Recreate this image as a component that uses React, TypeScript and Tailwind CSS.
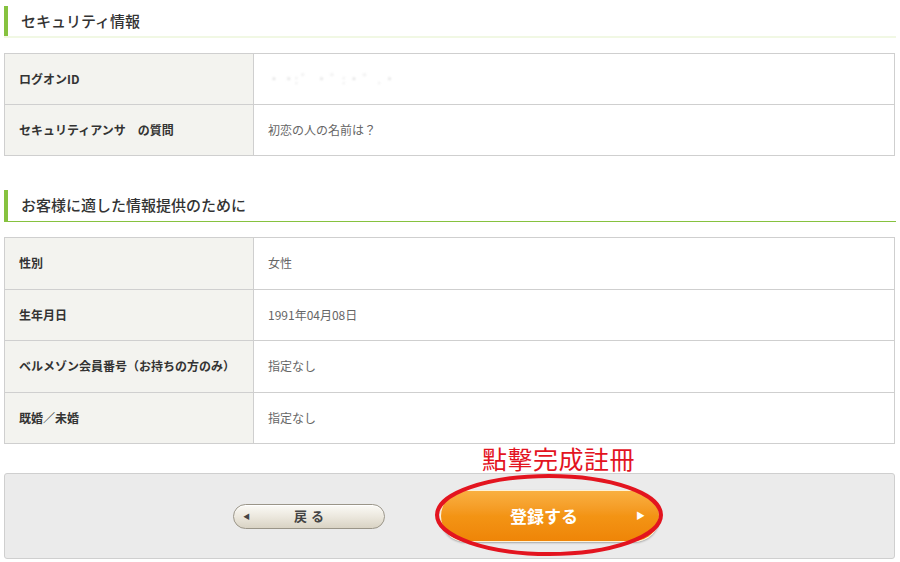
const font = { fontFamily: '"Noto Sans CJK JP", "Noto Sans", sans-serif' };

type Row = { label: string; value: string; blur?: boolean };

const security: Row[] = [
  { label: "ログオンID", value: "・ ・: ゛ ・ ゛: ・ ゜ . ・", blur: true },
  { label: "セキュリティアンサ　の質問", value: "初恋の人の名前は？" },
];

const profile: Row[] = [
  { label: "性別", value: "女性" },
  { label: "生年月日", value: "1991年04月08日" },
  { label: "ベルメゾン会員番号（お持ちの方のみ）", value: "指定なし" },
  { label: "既婚／未婚", value: "指定なし" },
];

function Heading({ title, faint }: { title: string; faint?: boolean }) {
  return (
    <div
      className={
        faint
          ? "flex h-[32px] items-center border-b-2 border-[#f1f8e4]"
          : "flex h-[32px] items-center border-b border-[#86c23f]"
      }
    >
      <div className="h-full w-[4px] bg-[#86c23f]" />
      <h2 className="pl-[13px] text-[15px] font-medium text-[#333]">{title}</h2>
    </div>
  );
}

function Table({ rows, rowH }: { rows: Row[]; rowH: string }) {
  return (
    <div className="border border-b-0 border-[#cfcfcf]">
      {rows.map((r) => (
        <div key={r.label} className={`flex border-b border-[#cfcfcf] ${rowH}`}>
          <div className="flex w-[249px] shrink-0 items-center border-r border-[#cfcfcf] bg-[#f3f3ef] pl-[14px] text-[12px] font-bold text-[#333]">
            {r.label}
          </div>
          <div
            className={
              r.blur
                ? "flex items-center pl-[14px] text-[12px] text-[#ddd] blur-[1px]"
                : "flex items-center pl-[14px] text-[12px] text-[#666]"
            }
          >
            {r.value}
          </div>
        </div>
      ))}
    </div>
  );
}

export default function App() {
  return (
    <div className="w-[900px] bg-white px-[4px] pt-[6px]" style={font}>
      <Heading title="セキュリティ情報" faint />
      <div className="mt-[15px] w-[891px]">
        <Table rows={security} rowH="h-[51px]" />
      </div>

      <div className="mt-[34px]">
        <Heading title="お客様に適した情報提供のために" />
      </div>
      <div className="mt-[15px] w-[891px]">
        <Table rows={profile} rowH="h-[51.5px]" />
      </div>

      <div className="flex h-[29px] items-center pl-[478px] text-[25px] leading-none tracking-[0.5px] text-[#e3141f]">
        點擊完成註冊
      </div>

      <div className="flex h-[86px] w-[891px] items-center rounded-[3px] border border-[#cfcfcf] bg-[#ebebeb]">
        <div className="ml-[228px] flex h-[25px] w-[152px] items-center rounded-full border border-[#9a9588] bg-gradient-to-b from-[#fbfaf6] via-[#ece8de] to-[#d9d3c4] shadow-[inset_0_1px_0_#fff]">
          <span className="ml-[9px] text-[7px] text-[#444]">◀</span>
          <span className="ml-[44px] text-[13px] font-bold tracking-[4px] text-[#444]">戻る</span>
        </div>

        <div className="relative ml-[53px] flex h-[54px] w-[224px] items-center justify-center">
          <div className="flex h-[52px] w-[220px] items-center rounded-full border border-[#fff3d8] bg-gradient-to-b from-[#f9b040] via-[#f39414] to-[#ef8507] shadow-[0_1px_2px_rgba(0,0,0,0.3)]">
            <span className="ml-[69px] text-[17px] font-bold text-white">登録する</span>
            <span className="ml-[58px] text-[9px] text-white">▶</span>
          </div>
          <svg
            className="absolute left-[-5px] top-[-17px]"
            width="232"
            height="86"
            viewBox="0 0 232 86"
          >
            <ellipse cx="116" cy="43" rx="112" ry="39" fill="none" stroke="#e3141f" strokeWidth="4" />
          </svg>
        </div>
      </div>
    </div>
  );
}
